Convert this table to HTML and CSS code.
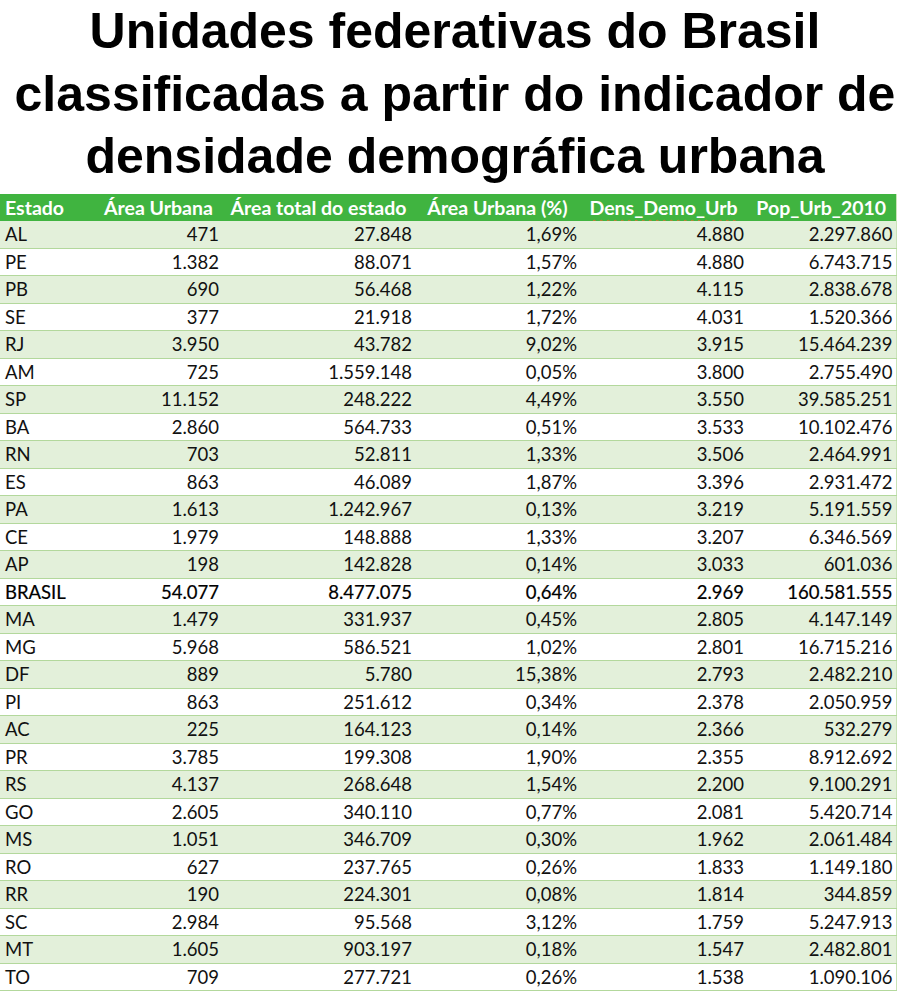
FILE: index.html
```html
<!DOCTYPE html>
<html lang="pt-BR">
<head>
<meta charset="utf-8">
<title>Unidades federativas do Brasil</title>
<link rel="stylesheet" href="styles.css">
</head>
<body>
<h1 class="title">Unidades federativas do Brasil<br>classificadas a partir do indicador de<br>densidade demográfica urbana</h1>
<table class="sheet">
<colgroup>
<col class="c1"><col class="c2"><col class="c3"><col class="c4"><col class="c5"><col class="c6">
</colgroup>
<thead>
<tr><th class="first">Estado</th><th>Área Urbana</th><th>Área total do estado</th><th>Área Urbana (%)</th><th><span class="spell">Dens_Demo_Urb</span></th><th>Pop_Urb_2010</th></tr>
</thead>
<tbody>
<tr><td>AL</td><td>471</td><td>27.848</td><td>1,69%</td><td>4.880</td><td>2.297.860</td></tr>
<tr><td>PE</td><td>1.382</td><td>88.071</td><td>1,57%</td><td>4.880</td><td>6.743.715</td></tr>
<tr><td>PB</td><td>690</td><td>56.468</td><td>1,22%</td><td>4.115</td><td>2.838.678</td></tr>
<tr><td>SE</td><td>377</td><td>21.918</td><td>1,72%</td><td>4.031</td><td>1.520.366</td></tr>
<tr><td>RJ</td><td>3.950</td><td>43.782</td><td>9,02%</td><td>3.915</td><td>15.464.239</td></tr>
<tr><td>AM</td><td>725</td><td>1.559.148</td><td>0,05%</td><td>3.800</td><td>2.755.490</td></tr>
<tr><td>SP</td><td>11.152</td><td>248.222</td><td>4,49%</td><td>3.550</td><td>39.585.251</td></tr>
<tr><td>BA</td><td>2.860</td><td>564.733</td><td>0,51%</td><td>3.533</td><td>10.102.476</td></tr>
<tr><td>RN</td><td>703</td><td>52.811</td><td>1,33%</td><td>3.506</td><td>2.464.991</td></tr>
<tr><td>ES</td><td>863</td><td>46.089</td><td>1,87%</td><td>3.396</td><td>2.931.472</td></tr>
<tr><td>PA</td><td>1.613</td><td>1.242.967</td><td>0,13%</td><td>3.219</td><td>5.191.559</td></tr>
<tr><td>CE</td><td>1.979</td><td>148.888</td><td>1,33%</td><td>3.207</td><td>6.346.569</td></tr>
<tr><td>AP</td><td>198</td><td>142.828</td><td>0,14%</td><td>3.033</td><td>601.036</td></tr>
<tr class="total"><td>BRASIL</td><td>54.077</td><td>8.477.075</td><td>0,64%</td><td>2.969</td><td>160.581.555</td></tr>
<tr><td>MA</td><td>1.479</td><td>331.937</td><td>0,45%</td><td>2.805</td><td>4.147.149</td></tr>
<tr><td>MG</td><td>5.968</td><td>586.521</td><td>1,02%</td><td>2.801</td><td>16.715.216</td></tr>
<tr><td>DF</td><td>889</td><td>5.780</td><td>15,38%</td><td>2.793</td><td>2.482.210</td></tr>
<tr><td>PI</td><td>863</td><td>251.612</td><td>0,34%</td><td>2.378</td><td>2.050.959</td></tr>
<tr><td>AC</td><td>225</td><td>164.123</td><td>0,14%</td><td>2.366</td><td>532.279</td></tr>
<tr><td>PR</td><td>3.785</td><td>199.308</td><td>1,90%</td><td>2.355</td><td>8.912.692</td></tr>
<tr><td>RS</td><td>4.137</td><td>268.648</td><td>1,54%</td><td>2.200</td><td>9.100.291</td></tr>
<tr><td>GO</td><td>2.605</td><td>340.110</td><td>0,77%</td><td>2.081</td><td>5.420.714</td></tr>
<tr><td>MS</td><td>1.051</td><td>346.709</td><td>0,30%</td><td>1.962</td><td>2.061.484</td></tr>
<tr><td>RO</td><td>627</td><td>237.765</td><td>0,26%</td><td>1.833</td><td>1.149.180</td></tr>
<tr><td>RR</td><td>190</td><td>224.301</td><td>0,08%</td><td>1.814</td><td>344.859</td></tr>
<tr><td>SC</td><td>2.984</td><td>95.568</td><td>3,12%</td><td>1.759</td><td>5.247.913</td></tr>
<tr><td>MT</td><td>1.605</td><td>903.197</td><td>0,18%</td><td>1.547</td><td>2.482.801</td></tr>
<tr><td>TO</td><td>709</td><td>277.721</td><td>0,26%</td><td>1.538</td><td>1.090.106</td></tr>
</tbody>
</table>
</body>
</html>
```
FILE: styles.css
```css
body {
  margin: 0;
  background: #ffffff;
  color: #000000;
}

.title {
  margin: 0;
  padding-left: 10px;
  font-family: "Liberation Sans", Arial, sans-serif;
  font-weight: 700;
  font-size: 50px;
  line-height: 62.5px;
  text-align: center;
  color: #000000;
}

.sheet {
  margin-top: 6px;
  width: 896px;
  border-collapse: collapse;
  table-layout: fixed;
  font-family: Lato, "Open Sans", sans-serif;
  font-size: 18.5px;
  border-right: 1px solid #c9e3b8;
}

.c1 { width: 95px; }
.c2 { width: 127px; }
.c3 { width: 193px; }
.c4 { width: 165px; }
.c5 { width: 167px; }
.c6 { width: 149px; }

.sheet th {
  background: #40b440;
  color: #ffffff;
  font-weight: 700;
  font-size: 19.5px;
  height: 27px;
  padding: 0;
  text-align: center;
  white-space: nowrap;
  overflow: hidden;
}

.sheet th.first {
  text-align: left;
  padding-left: 5px;
}

.spell {
  text-decoration: underline wavy #d2782f;
  text-decoration-thickness: 1px;
  text-underline-offset: 4px;
}

.sheet td {
  height: 27.5px;
  padding: 0 3px 0 0;
  text-align: right;
  white-space: nowrap;
  color: #111111;
  border-bottom: 1px solid #b3d89c;
  box-sizing: border-box;
}

.sheet td:first-child {
  text-align: left;
  padding: 0 0 0 5px;
}

.sheet tbody tr:nth-child(odd) td {
  background: #e3f0da;
}

.sheet tr.total td {
  color: #000000;
  -webkit-text-stroke: 0.2px #000000;
}
```
